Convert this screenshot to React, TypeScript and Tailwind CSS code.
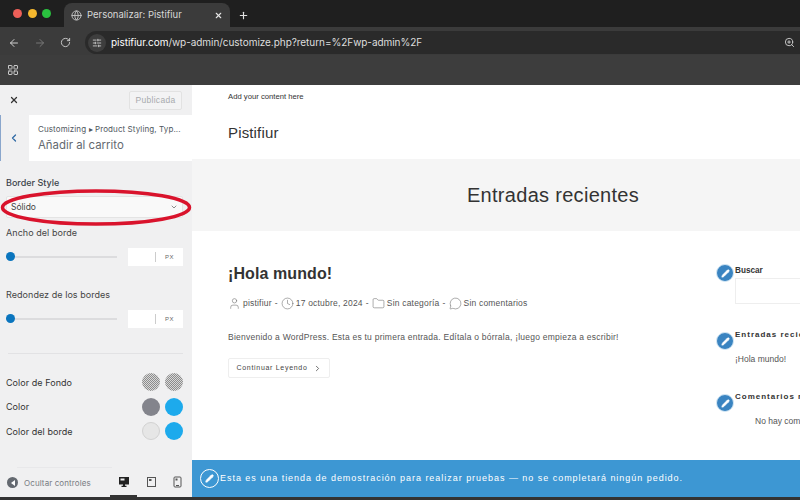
import { ArrowLeft, ArrowRight, RotateCw, Globe, X, Plus, SlidersHorizontal, LayoutGrid, ZoomIn, ChevronLeft, ChevronDown, ChevronRight, User, Clock, Folder, MessageCircle, Pencil } from "lucide-react";

function Slider({ label }: { label: string }) {
  return (
    <div>
      <div className="text-[9px] tracking-[0.05px] text-[#444] leading-[14px] font-['Inter',sans-serif]">{label}</div>
      <div className="flex items-center mt-[8px]">
        <div className="relative w-[111px] h-[2px] bg-[#dcdcde] mr-[11px]">
          <div className="absolute left-0 top-[-4px] w-[9px] h-[9px] rounded-full bg-[#0a75be]" />
        </div>
        <div className="w-[55px] h-[18px] bg-white flex items-center">
          <div className="w-[28px] h-[10px] border-r border-[#ccc]" />
          <div className="flex-1 text-center text-[6px] tracking-[0.6px] text-[#666]">PX</div>
        </div>
      </div>
    </div>
  );
}

function Swatches({ label, a, b }: { label: string; a: string; b: string }) {
  return (
    <div className="flex items-center h-[24.5px]">
      <div className="flex-1 text-[9px] tracking-[0.05px] text-[#333] font-['Inter',sans-serif]">{label}</div>
      <div className={`w-[18px] h-[18px] rounded-full mr-[5px] ${a}`} />
      <div className={`w-[18px] h-[18px] rounded-full ${b}`} />
    </div>
  );
}

function EditDot({ className }: { className: string }) {
  return (
    <div className={`w-[18px] h-[18px] rounded-full bg-[#3a84c1] border border-[#d5e8f5] flex items-center justify-center shrink-0 ${className}`}>
      <Pencil size={9} color="#fff" fill="#fff" strokeWidth={1.5} />
    </div>
  );
}

export default function App() {
  const checker = "bg-[repeating-conic-gradient(#8c8c8c_0_25%,#d8d8d8_0_50%)] bg-[length:2px_2px]";
  return (
    <div className="relative w-[800px] h-[500px] overflow-hidden flex flex-col bg-[#333333] font-['Liberation_Sans',sans-serif]">
      {/* tab strip */}
      <div className="h-[27px] bg-[#1f1f1f] flex shrink-0 items-end">
        <div className="flex items-center gap-[5.5px] pl-[13px] w-[64px] h-[27px]">
          <div className="w-[9px] h-[9px] rounded-full bg-[#ed5f58]" />
          <div className="w-[9px] h-[9px] rounded-full bg-[#f5b82e]" />
          <div className="w-[9px] h-[9px] rounded-full bg-[#2ac23f]" />
        </div>
        <div className="w-[166px] h-[24px] bg-[#3b3b3b] rounded-t-[8px] flex items-center pl-[7px] pr-[7px]">
          <Globe size={11} color="#c4c4c4" />
          <span className="ml-[5px] flex-1 text-[9.5px] text-[#d8d8d8] font-['Inter',sans-serif]">Personalizar: Pistifiur</span>
          <X size={9} color="#e6e6e6" strokeWidth={3} />
        </div>
        <div className="h-[24px] flex items-center ml-[8px]">
          <Plus size={11} color="#e0e0e0" strokeWidth={2.5} />
        </div>
      </div>
      {/* toolbar */}
      <div className="h-[28px] bg-[#3b3b3b] flex items-center pt-[3px] shrink-0">
        <div className="flex items-center gap-[14px] pl-[8px] w-[85px]">
          <ArrowLeft size={12} color="#cfcfcf" />
          <ArrowRight size={12} color="#777" />
          <RotateCw size={11} color="#cfcfcf" />
        </div>
        <div className="flex-1 h-[23px] bg-[#2a2a2a] rounded-l-full flex items-center pl-[3px]">
          <div className="w-[18px] h-[18px] rounded-full bg-[#3e3e3e] flex items-center justify-center">
            <SlidersHorizontal size={10} color="#d4d4d4" />
          </div>
          <span className="ml-[5px] flex-1 text-[10px] text-[#dedede] font-['Inter',sans-serif] tracking-[-0.05px]">
            <span className="text-white">pistifiur.com</span>/wp-admin/customize.php?return=%2Fwp-admin%2F
          </span>
          <ZoomIn size={11} color="#cfcfcf" className="mr-[5px]" />
        </div>
      </div>
      {/* bookmarks */}
      <div className="h-[30px] bg-[#3d3d3d] flex items-center pl-[7px] shrink-0">
        <LayoutGrid size={12} color="#c8c8c8" />
      </div>
      {/* page */}
      <div className="h-[412px] flex shrink-0 bg-white">
        {/* customizer */}
        <div className="w-[192px] shrink-0 bg-[#f0f0f1] flex flex-col">
          <div className="h-[30px] flex items-center justify-between pl-[9px] pr-[10px] shrink-0">
            <X size={10} color="#333" strokeWidth={3} />
            <div className="w-[53px] h-[19px] border border-[#e2e2e2] rounded-[2px] flex items-center justify-center text-[8.5px] tracking-[0.3px] text-[#a7aaad] bg-[#f3f3f4]">Publicada</div>
          </div>
          <div className="h-[46px] flex shrink-0 bg-white">
            <div className="w-[29px] bg-[#f0f0f1] border-l border-[#8aa6cc] flex items-center justify-center pr-[2px]">
              <ChevronLeft size={12} color="#2f6aa5" strokeWidth={2.5} />
            </div>
            <div className="flex-1 pl-[9px] pt-[8px] min-w-0">
              <div className="text-[8px] tracking-[0.1px] text-[#50575e] leading-[12px] whitespace-nowrap font-['Inter',sans-serif]">Customizing ▸ Product Styling, Typ...</div>
              <div className="text-[11.4px] text-[#646970] leading-[17px] mt-[2px] font-['Inter',sans-serif]">Añadir al carrito</div>
            </div>
          </div>
          <div className="px-[6px] pt-[15px] flex-1 flex flex-col">
            <div className="text-[9px] font-medium text-[#3c434a] leading-[14px] font-['Inter',sans-serif]">Border Style</div>
            <div className="mt-[6px] h-[22px] mr-[3px] bg-[#f9f9f9] border border-[#e4e4e4] rounded-[2px] flex items-center justify-between pl-[4px] pr-[4px]">
              <span className="text-[8.5px] text-[#444] font-['Inter',sans-serif]">Sólido</span>
              <ChevronDown size={8} color="#555" />
            </div>
            <div className="mt-[8px]"><Slider label="Ancho del borde" /></div>
            <div className="mt-[22px]"><Slider label="Redondez de los bordes" /></div>
            <div className="mt-[25px] h-px bg-[#e2e2e4] ml-[2px] mr-[3px]" />
            <div className="mt-[16px] mr-[3px]">
              <Swatches label="Color de Fondo" a={checker} b={checker} />
              <Swatches label="Color" a="bg-[#83848c]" b="bg-[#1daaec]" />
              <Swatches label="Color del borde" a="bg-[#e6e6e6] border border-[#d2d2d2]" b="bg-[#1daaec]" />
            </div>
            <div className="flex-1" />
            <div className="h-px bg-[#e8e8ea] ml-[11px] w-[95px]" />
          </div>
          <div className="h-[29px] shrink-0 flex items-center pl-[7px] relative">
            <div className="w-[11px] h-[11px] rounded-full bg-[#646970] flex items-center justify-center">
              <div className="w-0 h-0 border-y-[3px] border-y-transparent border-r-[4px] border-r-white" />
            </div>
            <span className="ml-[6px] text-[8px] tracking-[0.1px] text-[#787c82] font-['Inter',sans-serif]">Ocultar controles</span>
            <svg className="absolute left-[118px] top-[8px]" width="12" height="12" viewBox="0 0 12 12"><path d="M1 1h10v7.5H7v1.2h1.5V11h-5V9.700H5V8.500H1z" fill="#222" /><rect x="2.500" y="2.500" width="4" height="2" fill="#eee" /></svg>
            <svg className="absolute left-[146px] top-[8px]" width="11" height="12" viewBox="0 0 11 12"><rect x="1.500" y="1.500" width="8" height="9" fill="none" stroke="#555" /><rect x="3" y="3" width="2.500" height="2" fill="#555" /></svg>
            <svg className="absolute left-[172px] top-[8px]" width="11" height="12" viewBox="0 0 11 12"><rect x="2" y="1" width="7" height="10" rx="1" fill="none" stroke="#555" /><rect x="3.500" y="2.500" width="2" height="2" fill="#555" /><rect x="4" y="9" width="3" height="1" fill="#555" /></svg>
            <div className="absolute left-[110px] bottom-0 w-[27px] h-[2px] bg-[#333]" />
          </div>
        </div>
        {/* preview */}
        <div className="flex-1 min-w-0 flex flex-col overflow-hidden bg-white">
          <div className="flex-1 min-h-0 w-[722px] overflow-hidden">
            <div className="h-[74px] pl-[36px]">
              <div className="pt-[7px] text-[7.7px] leading-[10px] text-[#333]">Add your content here</div>
              <div className="mt-[21px] text-[15px] leading-[20px] text-[#333] tracking-[0.15px]">Pistifiur</div>
            </div>
            <div className="h-[72px] bg-[#f5f5f5] flex items-center justify-center text-[20px] text-[#333] tracking-[0.3px]">Entradas recientes</div>
            <div className="flex">
              <div className="w-[497px] ml-[36px] shrink-0 pt-[33px]">
                <div className="text-[16px] leading-[20px] font-bold tracking-[0.1px] text-[#333]">¡Hola mundo!</div>
                <div className="mt-[13px] flex items-center text-[8.5px] tracking-[0.2px] text-[#555] whitespace-nowrap">
                  <User size={13} strokeWidth={1} color="#666" />
                  <span className="ml-[2px]">pistifiur</span>
                  <span className="mx-[3px]">-</span>
                  <Clock size={13} strokeWidth={1} color="#666" />
                  <span className="ml-[2px]">17 octubre, 2024</span>
                  <span className="mx-[3px]">-</span>
                  <Folder size={13} strokeWidth={1} color="#666" />
                  <span className="ml-[2px]">Sin categoría</span>
                  <span className="mx-[3px]">-</span>
                  <MessageCircle size={13} strokeWidth={1} color="#666" />
                  <span className="ml-[2px]">Sin comentarios</span>
                </div>
                <div className="mt-[21px] text-[8.5px] tracking-[0.24px] leading-[12px] text-[#555] whitespace-nowrap">Bienvenido a WordPress. Esta es tu primera entrada. Edítala o bórrala, ¡luego empieza a escribir!</div>
                <div className="mt-[15px] w-[102px] h-[20px] border border-[#eee] rounded-[2px] flex items-center justify-center gap-[5px] text-[7px] tracking-[0.7px] text-[#444]">
                  Continuar Leyendo <ChevronRight size={9} strokeWidth={2} />
                </div>
              </div>
              <div className="w-[189px] shrink-0 pt-[33px] text-[#333]">
                <div className="relative pl-[10px]">
                  <EditDot className="absolute left-[-9px] top-0" />
                  <div className="pt-[1px] text-[8.2px] leading-[12px] font-bold">Buscar</div>
                  <div className="mt-[1px] h-[26px] border border-[#eee]" />
                </div>
                <div className="relative pl-[10px] mt-[25px]">
                  <EditDot className="absolute left-[-9px] top-[3px]" />
                  <div className="text-[8px] leading-[12px] font-bold tracking-[1px] whitespace-nowrap">Entradas recientes</div>
                  <div className="mt-[12px] text-[8.5px] leading-[12px] text-[#555]">¡Hola mundo!</div>
                </div>
                <div className="relative pl-[10px] mt-[26px]">
                  <EditDot className="absolute left-[-9px] top-[3px]" />
                  <div className="text-[8px] leading-[12px] font-bold tracking-[1px] whitespace-nowrap">Comentarios recientes</div>
                  <div className="mt-[12px] pl-[20px] text-[8.5px] leading-[12px] text-[#555] whitespace-nowrap">No hay comentarios</div>
                </div>
              </div>
            </div>
          </div>
          <div className="h-[37px] bg-[#3d97d3] flex items-center pl-[8px] shrink-0">
            <div className="w-[19px] h-[19px] rounded-full border-[1.5px] border-white flex items-center justify-center">
              <Pencil size={9} color="#fff" fill="#fff" />
            </div>
            <span className="ml-[1px] text-[9px] tracking-[0.97px] text-white whitespace-nowrap">Esta es una tienda de demostración para realizar pruebas — no se completará ningún pedido.</span>
          </div>
        </div>
      </div>
      {/* red annotation ellipse */}
      <svg className="absolute left-0 top-[182px]" width="196" height="48" viewBox="0 0 196 48">
        <ellipse cx="96" cy="25.500" rx="93.500" ry="16.500" fill="none" stroke="#d9132c" strokeWidth="3.500" />
      </svg>
    </div>
  );
}
